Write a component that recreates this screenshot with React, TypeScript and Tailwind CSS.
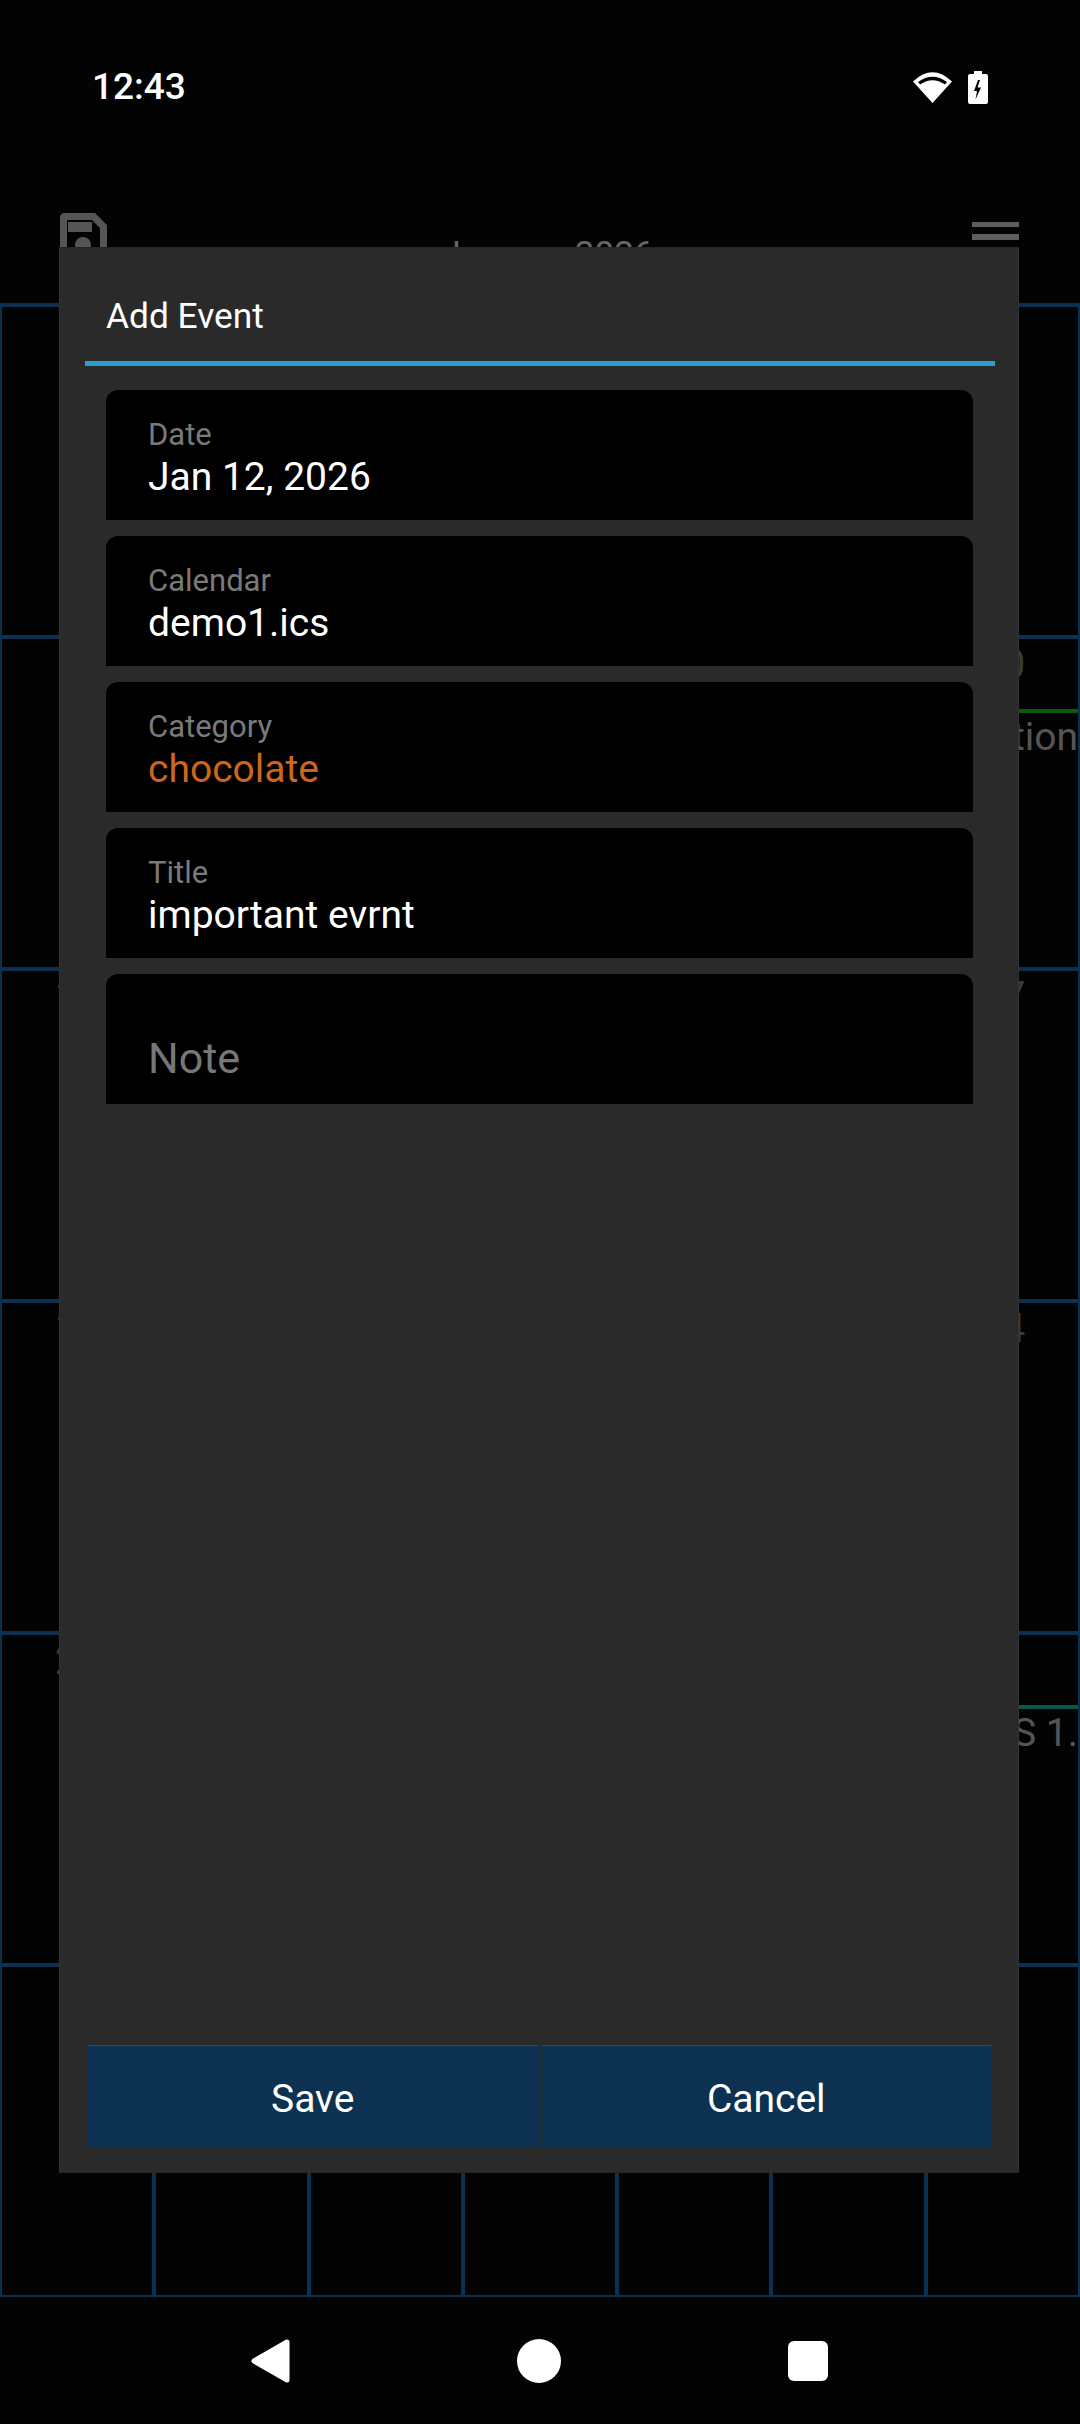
const ROWS: { day?: number; bar?: string; text?: string }[][] = [
  [{}, {}, {}, {}, { day: 1 }, { day: 2 }, { day: 3 }],
  [{ day: 4 }, { day: 5 }, { day: 6 }, { day: 7 }, { day: 8 }, { day: 9 }, { day: 10, bar: 'bg-[#0a5c0a]', text: 'tion' }],
  [{ day: 11 }, { day: 12 }, { day: 13 }, { day: 14 }, { day: 15 }, { day: 16 }, { day: 17 }],
  [{ day: 18 }, { day: 19 }, { day: 20 }, { day: 21 }, { day: 22 }, { day: 23 }, { day: 24 }],
  [{ day: 25 }, { day: 26 }, { day: 27 }, { day: 28 }, { day: 29 }, { day: 30 }, { day: 31, bar: 'bg-[#07594f]', text: 'S 1.' }],
  [{}, {}, {}, {}, {}, {}, {}],
];

const FIELDS = [
  { label: 'Date', value: 'Jan 12, 2026', color: 'text-white' },
  { label: 'Calendar', value: 'demo1.ics', color: 'text-white' },
  { label: 'Category', value: 'chocolate', color: 'text-[#cd661d]' },
  { label: 'Title', value: 'important evrnt', color: 'text-white' },
];

export default function App() {
  return (
    <div className="relative flex h-[2424px] w-[1080px] flex-col overflow-hidden bg-[#030303] font-[Roboto,sans-serif]">
      <StatusBar />
      <Toolbar />

      {/* Calendar behind the dialog */}
      <div className="border-t-2 border-[#0c3050]">
        {ROWS.map((row, i) => (
          <div key={i} className="grid h-[332px] grid-cols-7">
            {row.map((cell, j) => (
              <DayCell key={j} {...cell} />
            ))}
          </div>
        ))}
      </div>

      <NavBar />

      {/* Add event dialog */}
      <div className="absolute left-[59px] top-[247px] flex h-[1926px] w-[960px] flex-col border-x border-t border-b border-x-[#333333] border-y-[#262626] bg-[#2a2a2a]">
        <div className="pl-[46px] pt-[48px] text-[35.3px] leading-[41px] text-white">Add Event</div>
        <div className="ml-[25px] mr-[23px] mt-[24px] h-[5px] bg-[#2b9fd0]" />

        <div className="mt-[24px] flex flex-col gap-[16px] pl-[46px] pr-[45px]">
          {FIELDS.map((f) => (
            <div key={f.label} className="h-[130px] rounded-t-[12px] bg-black pl-[42px] pt-[27px]">
              <div className="text-[31px] leading-[36px] text-[#7a7a7a]">{f.label}</div>
              <div className={`mt-[1px] text-[39px] leading-[46px] ${f.color}`}>{f.value}</div>
            </div>
          ))}
          <div className="flex h-[130px] items-end rounded-t-[12px] bg-black pb-[21px] pl-[42px]">
            <span className="text-[43px] leading-[50px] text-[#777777]">Note</span>
          </div>
        </div>

        <div className="mb-[24px] ml-[27px] mr-[26px] mt-auto flex h-[103px] gap-[2px]">
          <ActionButton label="Save" />
          <ActionButton label="Cancel" />
        </div>
      </div>
    </div>
  );
}

function StatusBar() {
  return (
    <div className="flex h-[130px] items-start justify-between pl-[92px] pr-[92px] pt-[65px]">
      <span className="text-[37px] font-medium leading-[44px] text-white">12:43</span>
      <div className="flex items-start gap-[16px] pt-[6px]">
        <svg width="39" height="31" viewBox="0 0 39 31" className="mt-[1px]">
          <path d="M0 9.5Q19.5 -9 39 9.5L19.5 31Z" fill="#fff" />
          <path d="M5 10Q19.5 -0.5 34 10L32 12.5Q19.5 4 7 12.5Z" fill="#030303" />
        </svg>
        <svg width="20" height="33" viewBox="0 0 20 33">
          <path d="M6 0H14V3H18Q20 3 20 5V31Q20 33 18 33H2Q0 33 0 31V5Q0 3 2 3H6Z" fill="#fff" />
          <path d="M10 9L6 20H9L7.5 28.5L13 16.5H9.5L12 9Z" fill="#030303" />
        </svg>
      </div>
    </div>
  );
}

function Toolbar() {
  return (
    <div className="flex h-[173px] items-start justify-between pl-[60px] pr-[61px] pt-[83px]">
      <svg width="47" height="47" viewBox="0 0 47 47">
        <path
          fillRule="evenodd"
          d="M5 0H35L47 12V42Q47 47 42 47H5Q0 47 0 42V5Q0 0 5 0ZM7 7V40H40V15L32 7Z"
          fill="#555555"
        />
        <rect x="8" y="9" width="24" height="10" fill="#555555" />
        <circle cx="23" cy="32" r="8" fill="#555555" />
      </svg>
      <span className="ml-[16px] mt-[21px] text-[35px] leading-[41px] text-[#666666]">January 2026</span>
      {/* third bar sits under the dialog */}
      <div className="flex w-[47px] flex-col gap-[7px] pt-[9px]">
        <div className="h-[5px] bg-[#5e5e5e]" />
        <div className="h-[6px] bg-[#5e5e5e]" />
        <div className="h-[5px] bg-[#5e5e5e]" />
      </div>
    </div>
  );
}

function DayCell({ day, bar, text }: { day?: number; bar?: string; text?: string }) {
  return (
    <div className="flex min-w-0 flex-col overflow-hidden border-2 border-[#0c3050]">
      <div className="h-[70px] shrink-0 pt-[2px] text-center text-[40px] leading-[47px] text-[#3a3a3a]">
        {day}
      </div>
      {bar && <div className={`h-[4px] shrink-0 ${bar}`} />}
      {text && (
        <div className="whitespace-nowrap pt-[1px] text-right text-[39px] leading-[46px] text-[#555555]">{text}</div>
      )}
    </div>
  );
}

function ActionButton({ label }: { label: string }) {
  return (
    <button className="flex-1 rounded-[2px] border-t border-t-[#1c4f7a] border-b border-b-[#1d2a36] bg-[#0d3251] pt-[5px] text-[39px] text-white">
      {label}
    </button>
  );
}

function NavBar() {
  return (
    <div className="flex items-start justify-center gap-[227px] pr-[2px] pt-[42px]">
      <svg width="39" height="44" viewBox="0 0 39 44">
        <polygon points="3,22 36,3 36,41" fill="#fff" stroke="#fff" strokeWidth="5" strokeLinejoin="round" />
      </svg>
      <div className="size-[44px] rounded-full bg-white" />
      <div className="mt-[2px] size-[40px] rounded-[6px] bg-white" />
    </div>
  );
}
